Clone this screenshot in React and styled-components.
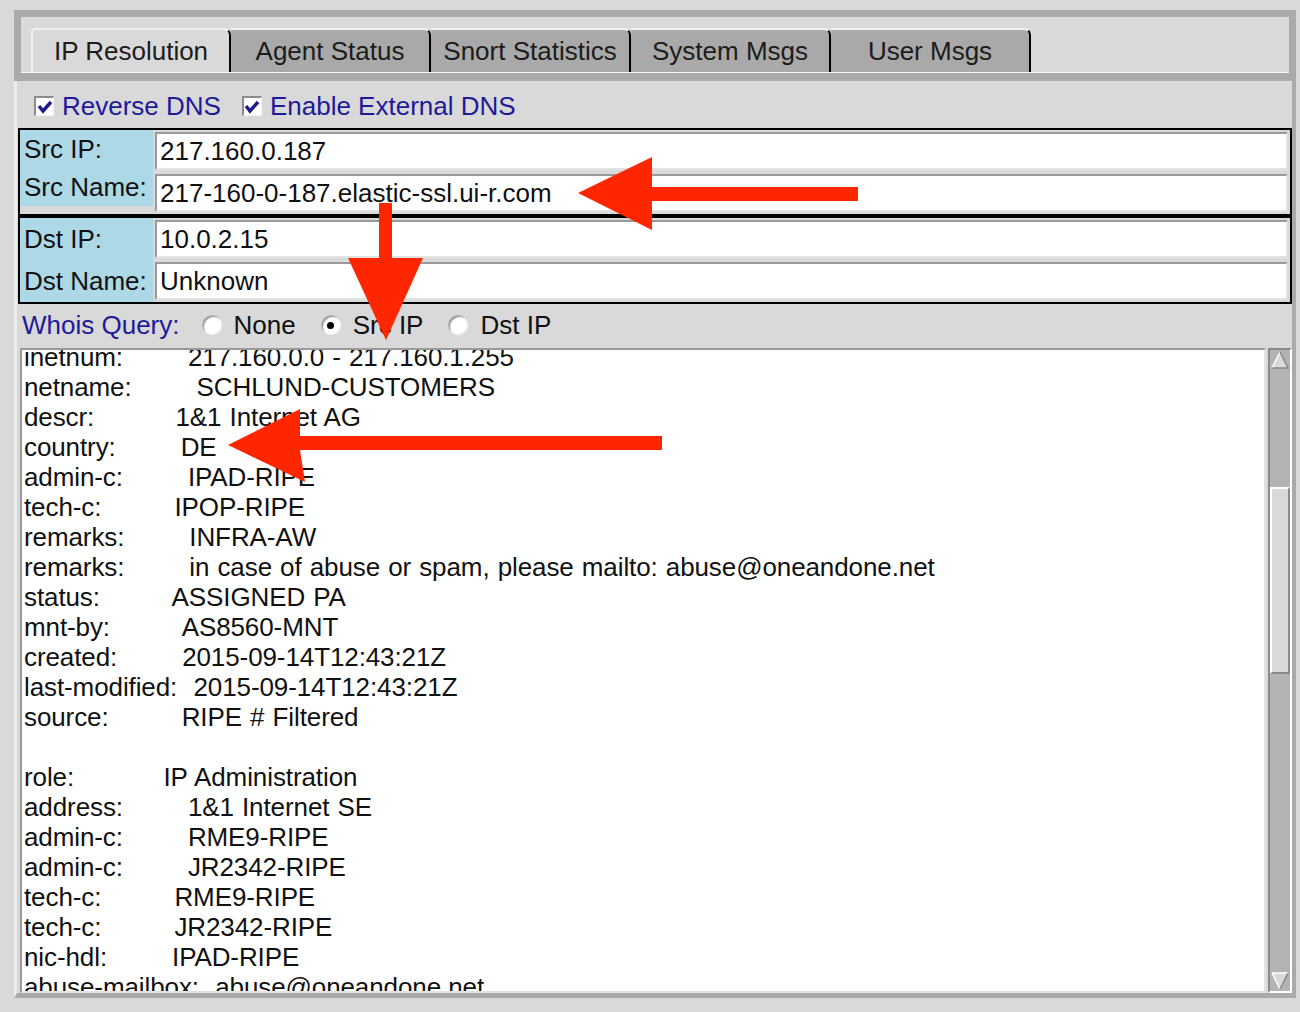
import React from "react";
import styled, { createGlobalStyle } from "styled-components";

const GlobalStyle = createGlobalStyle`
  html, body {
    margin: 0;
    padding: 0;
    background: #d9d9d9;
  }
  body {
    font-family: "Liberation Sans", Arial, sans-serif;
    font-size: 26px;
    color: #111;
  }
`;

const Page = styled.div`
  position: relative;
  width: 1300px;
  height: 1012px;
  padding: 10px 0 0 14px;
  box-sizing: border-box;
  overflow: hidden;
`;

const Notebook = styled.div`
  width: 1282px;
`;

const TabBar = styled.div`
  display: flex;
  align-items: flex-start;
  height: 45px;
  padding: 11px 0 0 10px;
  background: #d9d9d9;
  border: 7px solid #aaaaaa;
  border-bottom-width: 8px;
  box-shadow: inset 0 -1px 0 #f6f6f6;
`;

const Tab = styled.div`
  width: 200px;
  height: 44px;
  box-sizing: border-box;
  display: flex;
  align-items: center;
  justify-content: center;
  background: ${(p) => (p.$active ? "#d9d9d9" : "#a9a9a9")};
  border-top: 2px solid #f0f0f0;
  border-left: ${(p) => (p.$active ? "2px solid #f0f0f0" : "none")};
  border-right: 2px solid #000;
  border-top-right-radius: 7px;
  border-top-left-radius: ${(p) => (p.$active ? "5px" : "0")};
  color: #1c1c1c;
  font-size: 26px;
  white-space: nowrap;
`;

const Panel = styled.div`
  height: 917px;
  box-sizing: border-box;
  border-left: 3px solid #ececec;
  border-right: 4px solid #aaaaaa;
  border-bottom: 5px solid #aaaaaa;
  display: flex;
  flex-direction: column;
`;

const CheckRow = styled.div`
  height: 47px;
  box-sizing: border-box;
  display: flex;
  align-items: center;
  padding: 3px 0 0 17px;
`;

const CheckItem = styled.label`
  display: flex;
  align-items: center;
  gap: 8px;
  margin-right: 21px;
  color: #1f1a9c;
`;

const CheckBox = styled.span`
  width: 20px;
  height: 20px;
  box-sizing: border-box;
  background: #fff;
  border-top: 2px solid #8c8c8c;
  border-left: 2px solid #8c8c8c;
  border-right: 1px solid #f4f4f4;
  border-bottom: 1px solid #f4f4f4;
  display: flex;
  align-items: center;
  justify-content: center;
`;

const HostFrame = styled.div`
  margin-left: 1px;
  width: 1274px;
  box-sizing: border-box;
  border: 2px solid #000;
  display: flex;
  gap: 2px;
  padding-right: 2px;
`;

const LabelCol = styled.div`
  width: 133px;
  flex: none;
  display: flex;
  flex-direction: column;
  gap: ${(p) => (p.$spread ? "4px" : "0")};
  padding-top: ${(p) => (p.$spread ? "2px" : "0")};
  padding-bottom: ${(p) => (p.$spread ? "2px" : "0")};
  background: #add8e6;
  border-bottom: ${(p) => (p.$spread ? "none" : "8px solid #d9d9d9")};
`;

const FieldLabel = styled.div`
  height: 38px;
  display: flex;
  align-items: center;
  padding-left: 4px;
  color: #111;
  white-space: nowrap;
`;

const EntryCol = styled.div`
  flex: 1;
  display: flex;
  flex-direction: column;
  gap: 4px;
  padding: 2px 0;
`;

const Entry = styled.div`
  height: 38px;
  box-sizing: border-box;
  background: #fff;
  border-top: 2px solid #9a9a9a;
  border-left: 2px solid #9a9a9a;
  border-right: 2px solid #e2e2e2;
  border-bottom: 2px solid #e2e2e2;
  padding-left: 3px;
  display: flex;
  align-items: center;
  color: #111;
  white-space: nowrap;
`;

const WhoisRow = styled.div`
  height: 44px;
  display: flex;
  align-items: center;
  padding: 0 0 2px 5px;
  box-sizing: border-box;
`;

const WhoisLabel = styled.span`
  color: #1f1a9c;
  margin-right: 22px;
`;

const RadioItem = styled.span`
  display: flex;
  align-items: center;
  gap: 12px;
  margin-right: 25px;
  color: #111;
`;

const Radio = styled.span`
  width: 20px;
  height: 20px;
  border-radius: 50%;
  background: #fff;
  box-shadow: inset 2px 2px 1px #a4a4a4, inset -1px -1px 0 #f0f0f0;
  display: flex;
  align-items: center;
  justify-content: center;
  &::after {
    content: "";
    width: 7px;
    height: 7px;
    border-radius: 50%;
    background: ${(p) => (p.$on ? "#000" : "transparent")};
  }
`;

const TextWrap = styled.div`
  margin-left: 3px;
  width: 1272px;
  height: 645px;
  display: flex;
  gap: 2px;
`;

const TextBox = styled.div`
  width: 1246px;
  flex: none;
  box-sizing: border-box;
  background: #fff;
  border-top: 2px solid #9a9a9a;
  border-left: 2px solid #9a9a9a;
  border-right: 2px solid #e2e2e2;
  border-bottom: 2px solid #e2e2e2;
  overflow: hidden;
`;

const WhoisText = styled.pre`
  margin: -8px 0 0 2px;
  font-family: "Liberation Sans", Arial, sans-serif;
  font-size: 26px;
  line-height: 30px;
  letter-spacing: -0.1px;
  word-spacing: 1px;
  color: #111;
  white-space: pre;
`;

const Scrollbar = styled.div`
  width: 24px;
  box-sizing: border-box;
  background: #b3b3b3;
  border-top: 2px solid #8a8a8a;
  border-left: 2px solid #8a8a8a;
  border-right: 2px solid #fff;
  border-bottom: 2px solid #fff;
  display: flex;
  flex-direction: column;
`;

const ArrowBtn = styled.div`
  height: 20px;
  flex: none;
  display: flex;
  align-items: center;
  justify-content: center;
  margin-top: ${(p) => (p.$down ? "auto" : "0")};
`;

const Thumb = styled.div`
  height: 187px;
  box-sizing: border-box;
  background: #d9d9d9;
  border-top: 2px solid #fff;
  border-left: 2px solid #fff;
  border-right: 2px solid #8a8a8a;
  border-bottom: 2px solid #8a8a8a;
`;

const Overlay = styled.svg`
  position: absolute;
  left: 0;
  top: 0;
  pointer-events: none;
`;

const tabs = ["IP Resolution", "Agent Status", "Snort Statistics", "System Msgs", "User Msgs"];

const whois = [
  "inetnum:        217.160.0.0 - 217.160.1.255",
  "netname:        SCHLUND-CUSTOMERS",
  "descr:          1&1 Internet AG",
  "country:        DE",
  "admin-c:        IPAD-RIPE",
  "tech-c:         IPOP-RIPE",
  "remarks:        INFRA-AW",
  "remarks:        in case of abuse or spam, please mailto: abuse@oneandone.net",
  "status:         ASSIGNED PA",
  "mnt-by:         AS8560-MNT",
  "created:        2015-09-14T12:43:21Z",
  "last-modified:  2015-09-14T12:43:21Z",
  "source:         RIPE # Filtered",
  "",
  "role:           IP Administration",
  "address:        1&1 Internet SE",
  "admin-c:        RME9-RIPE",
  "admin-c:        JR2342-RIPE",
  "tech-c:         RME9-RIPE",
  "tech-c:         JR2342-RIPE",
  "nic-hdl:        IPAD-RIPE",
  "abuse-mailbox:  abuse@oneandone.net",
].join("\n");

const Check = () => (
  <CheckBox>
    <svg width="16" height="16" viewBox="0 0 16 16">
      <path d="M2 7 L6 12 L14 3" stroke="#1d1a8e" strokeWidth="3.4" fill="none" />
    </svg>
  </CheckBox>
);

const HostBox = ({ rows, spread }) => (
  <HostFrame>
    <LabelCol $spread={spread}>
      {rows.map((r) => (
        <FieldLabel key={r[0]}>{r[0]}</FieldLabel>
      ))}
    </LabelCol>
    <EntryCol>
      {rows.map((r) => (
        <Entry key={r[0]}>{r[1]}</Entry>
      ))}
    </EntryCol>
  </HostFrame>
);

const App = () => {
  return (
    <Page>
      <GlobalStyle />
      <Notebook>
        <TabBar>
          {tabs.map((t, i) => (
            <Tab key={t} $active={i === 0}>{t}</Tab>
          ))}
        </TabBar>
        <Panel>
          <CheckRow>
            <CheckItem><Check />Reverse DNS</CheckItem>
            <CheckItem><Check />Enable External DNS</CheckItem>
          </CheckRow>
          <HostBox rows={[["Src IP:", "217.160.0.187"], ["Src Name:", "217-160-0-187.elastic-ssl.ui-r.com"]]} />
          <HostBox spread rows={[["Dst IP:", "10.0.2.15"], ["Dst Name:", "Unknown"]]} />
          <WhoisRow>
            <WhoisLabel>Whois Query:</WhoisLabel>
            <RadioItem><Radio />None</RadioItem>
            <RadioItem><Radio $on />Src IP</RadioItem>
            <RadioItem><Radio />Dst IP</RadioItem>
          </WhoisRow>
          <TextWrap>
            <TextBox>
              <WhoisText>{whois}</WhoisText>
            </TextBox>
            <Scrollbar>
              <ArrowBtn>
                <svg width="20" height="20" viewBox="0 0 20 20">
                  <polygon points="10,2 18,18 2,18" fill="#d9d9d9" />
                  <path d="M2 18 L10 2" stroke="#fff" strokeWidth="1.5" />
                  <path d="M10 2 L18 18 L2 18" stroke="#8a8a8a" strokeWidth="1.5" fill="none" />
                </svg>
              </ArrowBtn>
              <Thumb style={{ marginTop: 117 }} />
              <ArrowBtn $down>
                <svg width="20" height="20" viewBox="0 0 20 20">
                  <polygon points="2,2 18,2 10,18" fill="#d9d9d9" />
                  <path d="M2 2 L18 2 M2 2 L10 18" stroke="#fff" strokeWidth="1.5" />
                  <path d="M18 2 L10 18" stroke="#8a8a8a" strokeWidth="1.5" />
                </svg>
              </ArrowBtn>
            </Scrollbar>
          </TextWrap>
        </Panel>
      </Notebook>
      <Overlay width="1300" height="1012" viewBox="0 0 1300 1012">
        <polygon points="578,193 652,157 652,187 858,187 858,201 652,201 652,230" fill="#ff2600" />
        <polygon points="379,203 392,203 392,258 423,258 386,340 348,258 379,258" fill="#ff2600" />
        <polygon points="228,445 300,409 300,436 662,436 662,450 300,450 305,482" fill="#ff2600" />
      </Overlay>
    </Page>
  );
};

export default App;
